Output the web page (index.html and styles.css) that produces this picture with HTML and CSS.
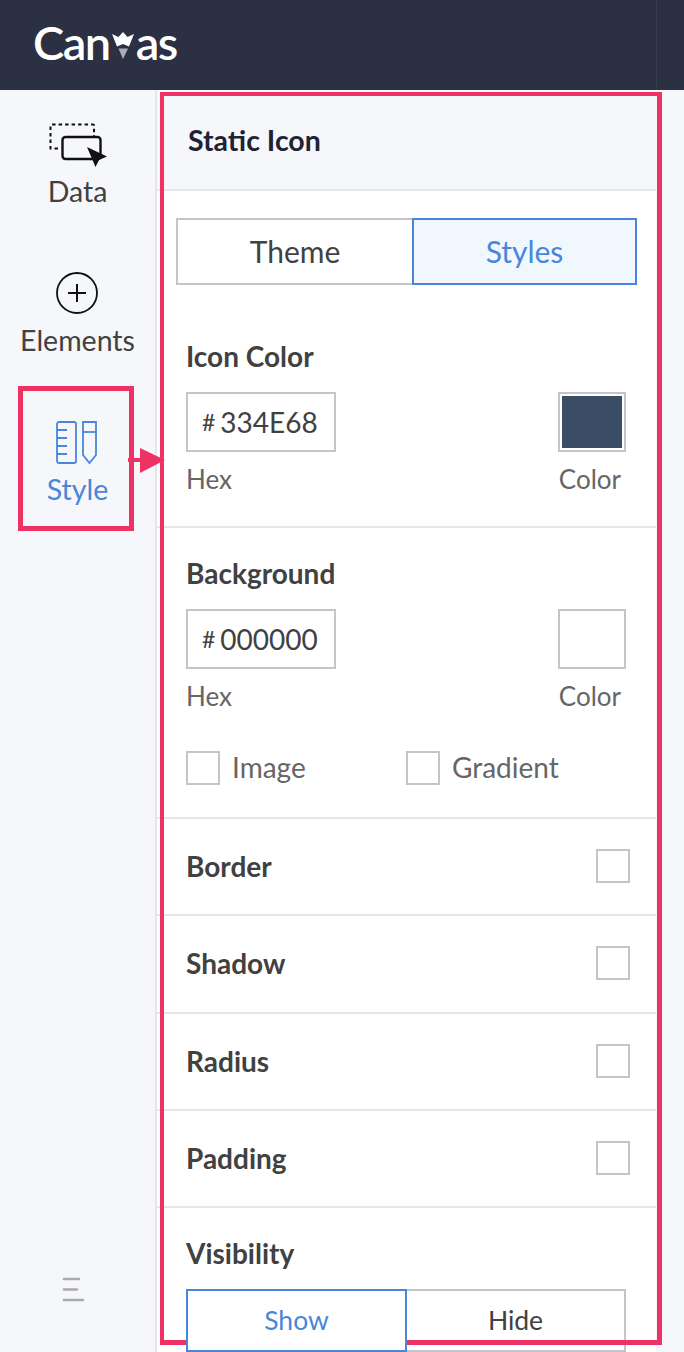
FILE: index.html
```html
<!DOCTYPE html>
<html lang="en">
<head>
  <meta charset="UTF-8" />
  <meta name="viewport" content="width=device-width, initial-scale=1.0" />
  <title>Canvas - Static Icon</title>
  <link rel="stylesheet" href="styles.css">
</head>
<body>

  <header class="topbar">
    <div class="logo">
      <span>Can</span>
      <svg class="logo-v" width="28" height="30" viewBox="0 0 28 30">
        <path d="M3 3 L9.500 6 L14 1 L18.500 6 L25 3 L20 15.500 L14 13 L8 15.500 Z" fill="#fff"/>
        <path d="M9.500 17.500 H19 L14 28 Z" fill="#a9adb8"/>
      </svg>
      <span>as</span>
    </div>
  </header>

  <div class="workspace">
    <!-- Barra lateral -->
    <nav class="sidebar">
      <a class="nav-item nav-data">
        <svg width="60" height="45" viewBox="0 0 60 45" fill="none">
          <path d="M10 25.500 H2.500 V2.500 Q2.500 1.500 3.500 1.500 H45 Q46 1.500 46 2.500 V13" stroke="#111" stroke-width="2" stroke-dasharray="3.500 3"/>
          <rect x="14.500" y="14" width="38" height="22" rx="3" stroke="#111" stroke-width="2.400"/>
          <path d="M39 24 L59 33.500 L51 37 L47.500 44 Z" fill="#111"/>
        </svg>
        <span>Data</span>
      </a>
      <a class="nav-item nav-elements">
        <svg width="42" height="42" viewBox="0 0 42 42" fill="none" stroke="#111">
          <circle cx="21" cy="21" r="20" stroke-width="1.800"/>
          <path d="M21 12 V30 M12 21 H30" stroke-width="2"/>
        </svg>
        <span>Elements</span>
      </a>
      <a class="nav-item nav-style active">
        <svg width="42" height="44" viewBox="0 0 42 44" fill="none" stroke="#4a86d8" stroke-width="1.800">
          <rect x="1" y="1" width="19" height="41" rx="2"/>
          <path d="M1 9 H11 M1 17 H11 M1 25 H11 M1 33 H11"/>
          <path d="M27 1 H40 V34 L33.500 42 L27 34 Z"/>
          <path d="M27 11 H40"/>
        </svg>
        <span>Style</span>
      </a>
      <svg class="collapse" width="24" height="26" viewBox="0 0 24 26" fill="none" stroke="#aaa" stroke-width="2.600" stroke-linecap="round">
        <path d="M2 2 H17 M2 12.500 H15 M2 23 H21"/>
      </svg>
    </nav>

    <main class="panel">
      <div class="panel-title">Static Icon</div>

      <div class="tabs-wrap">
        <div class="seg seg-tabs">
          <div class="seg-btn">Theme</div>
          <div class="seg-btn selected">Styles</div>
        </div>
      </div>

      <section class="group group-icon">
        <h4>Icon Color</h4>
        <div class="color-row">
          <div class="hex-input"><span class="hash">#</span>334E68</div>
          <div class="swatch"><i class="swatch-fill"></i></div>
        </div>
        <div class="caption-row"><span>Hex</span><span>Color</span></div>
      </section>

      <section class="group group-bg">
        <h4>Background</h4>
        <div class="color-row">
          <div class="hex-input"><span class="hash">#</span>000000</div>
          <div class="swatch"></div>
        </div>
        <div class="caption-row"><span>Hex</span><span>Color</span></div>
        <div class="check-row">
          <label class="check-item"><i class="check"></i><span class="check-label">Image</span></label>
          <label class="check-item"><i class="check"></i><span class="check-label">Gradient</span></label>
        </div>
      </section>

      <section class="row row-tall"><h4>Border</h4><i class="check"></i></section>
      <section class="row row-taller"><h4>Shadow</h4><i class="check"></i></section>
      <section class="row row-tall"><h4>Radius</h4><i class="check"></i></section>
      <section class="row row-tall"><h4>Padding</h4><i class="check"></i></section>

      <section class="group-vis">
        <h4>Visibility</h4>
        <div class="seg seg-vis">
          <div class="seg-btn selected">Show</div>
          <div class="seg-btn">Hide</div>
        </div>
      </section>
    </main>

    <div class="right-strip"></div>
  </div>

  <!-- Anotaciones rosas sobre la captura -->
  <div class="mark mark-panel"></div>
  <div class="mark mark-style"></div>
  <svg class="mark-arrow" width="40" height="26" viewBox="0 0 40 26">
    <path d="M0 10 H12 V0 L37 12 L12 25 V14 H0 Z" fill="#ee3364"/>
  </svg>

</body>
</html>
```

FILE: styles.css
```css
* {
  box-sizing: border-box;
}
html, body {
  margin: 0;
  padding: 0;
  height: 1352px;
  overflow: hidden;
}
body {
  font-family: 'Lato', sans-serif;
  background-color: #f5f7fb;
  color: #414141;
  position: relative;
}
h4 {
  margin: 0;
  font-size: 28px;
  font-weight: 700;
  line-height: 32px;
  color: #414141;
}

.topbar {
  height: 90px;
  background-color: #2b3042;
  padding-left: 33px;
  position: relative;
}
.topbar::after {
  content: '';
  position: absolute;
  top: 0;
  bottom: 0;
  left: 656px;
  width: 1px;
  background: #3a3f50;
}
.logo {
  display: flex;
  align-items: flex-start;
  color: white;
  font-size: 47px;
  font-weight: 600;
  letter-spacing: -1.500px;
  line-height: 84px;
  height: 90px;
}
.logo-v {
  margin: 31px -1px 0 -1px;
  flex-shrink: 0;
}

.workspace {
  display: flex;
  height: 1262px;
}

.sidebar {
  width: 155px;
  flex-shrink: 0;
  display: flex;
  flex-direction: column;
  align-items: center;
  position: relative;
}
.nav-item {
  display: flex;
  flex-direction: column;
  align-items: center;
  font-size: 28.500px;
  line-height: 34px;
  color: #414141;
}
.nav-data {
  padding-top: 33px;
  gap: 6px;
  height: 180px;
}
.nav-elements {
  gap: 9px;
  height: 150px;
  padding-top: 2px;
}
.nav-style {
  gap: 7px;
  padding-top: 1px;
}
.active {
  color: #4a86d8;
}
.collapse {
  position: absolute;
  left: 62px;
  top: 1187px;
}

.panel {
  width: 501px;
  flex-shrink: 0;
  background: white;
  border-left: 2px solid #e6e6e8;
}
.panel-title {
  height: 101px;
  background-color: #f5f7fb;
  border-bottom: 2px solid #e6e6e8;
  padding: 33px 0 0 31px;
  font-size: 28.500px;
  line-height: 34px;
  font-weight: 700;
  color: #1f2233;
}

.tabs-wrap {
  padding: 27px 19px 0 19px;
}
.seg {
  display: flex;
  font-size: 30px;
}
.seg-btn {
  flex: 1;
  display: flex;
  align-items: center;
  justify-content: center;
  padding-bottom: 2px;
  background: white;
  border: 2px solid #c4c4ca;
  color: #414141;
}
.seg-btn + .seg-btn {
  margin-left: -2px;
}
.seg-btn.selected {
  border-color: #4a86d8;
  color: #4a86d8;
  position: relative;
}
.seg-tabs {
  height: 67px;
}
.seg-tabs .seg-btn:first-child {
  flex: 0 0 236px;
  border-right: 0;
}
.seg-tabs .seg-btn.selected {
  background-color: #f0f7ff;
  margin-left: 0;
}

.group {
  border-bottom: 2px solid #e6e6e8;
  padding: 0 30px 0 29px;
}
.group-icon {
  height: 243px;
  padding-top: 55px;
}
.group-bg {
  height: 291px;
  padding-top: 29px;
}
.color-row {
  display: flex;
  justify-content: space-between;
  margin-top: 20px;
  height: 60px;
}
.hex-input {
  width: 150px;
  height: 60px;
  border: 2px solid #c4c4ca;
  display: flex;
  align-items: center;
  padding-left: 14px;
  font-size: 28px;
  color: #414141;
}
.hash {
  font-size: 23px;
  margin-right: 5px;
}
.swatch {
  width: 68px;
  height: 60px;
  border: 2px solid #c4c4ca;
  padding: 2px;
}
.swatch-fill {
  display: block;
  width: 100%;
  height: 100%;
  background-color: #3b4d66;
}
.caption-row {
  display: flex;
  justify-content: space-between;
  margin-top: 11px;
  font-size: 26px;
  line-height: 32px;
  color: #666;
  padding-right: 5px;
}
.check-row {
  display: flex;
  margin-top: 39px;
  font-size: 28px;
  color: #666;
}
.check-item {
  display: flex;
  align-items: center;
  gap: 12px;
  width: 220px;
  height: 34px;
}
.check-label {
  margin-bottom: 2px;
}
.check {
  display: block;
  width: 34px;
  height: 34px;
  border: 2px solid #c4c4ca;
  background: white;
  flex-shrink: 0;
}

.row {
  display: flex;
  align-items: center;
  justify-content: space-between;
  border-bottom: 2px solid #e6e6e8;
  padding: 0 26px 2px 29px;
}
.row-tall {
  height: 97px;
}
.row-taller {
  height: 98px;
}

.group-vis {
  padding: 29px 29px 0 29px;
}
.seg-vis {
  margin-top: 20px;
  height: 63px;
  font-size: 26.500px;
  width: 440px;
}
.seg-vis .seg-btn.selected {
  z-index: 1;
}

.right-strip {
  flex: 1;
}

.mark {
  position: absolute;
  border: 5px solid #ee3364;
  pointer-events: none;
}
.mark-panel {
  left: 160px;
  top: 92px;
  width: 502px;
  height: 1253px;
  border-width: 4px 5px 5px 4px;
}
.mark-style {
  left: 18px;
  top: 386px;
  width: 116px;
  height: 145px;
}
.mark-arrow {
  position: absolute;
  left: 128px;
  top: 448px;
}
```
